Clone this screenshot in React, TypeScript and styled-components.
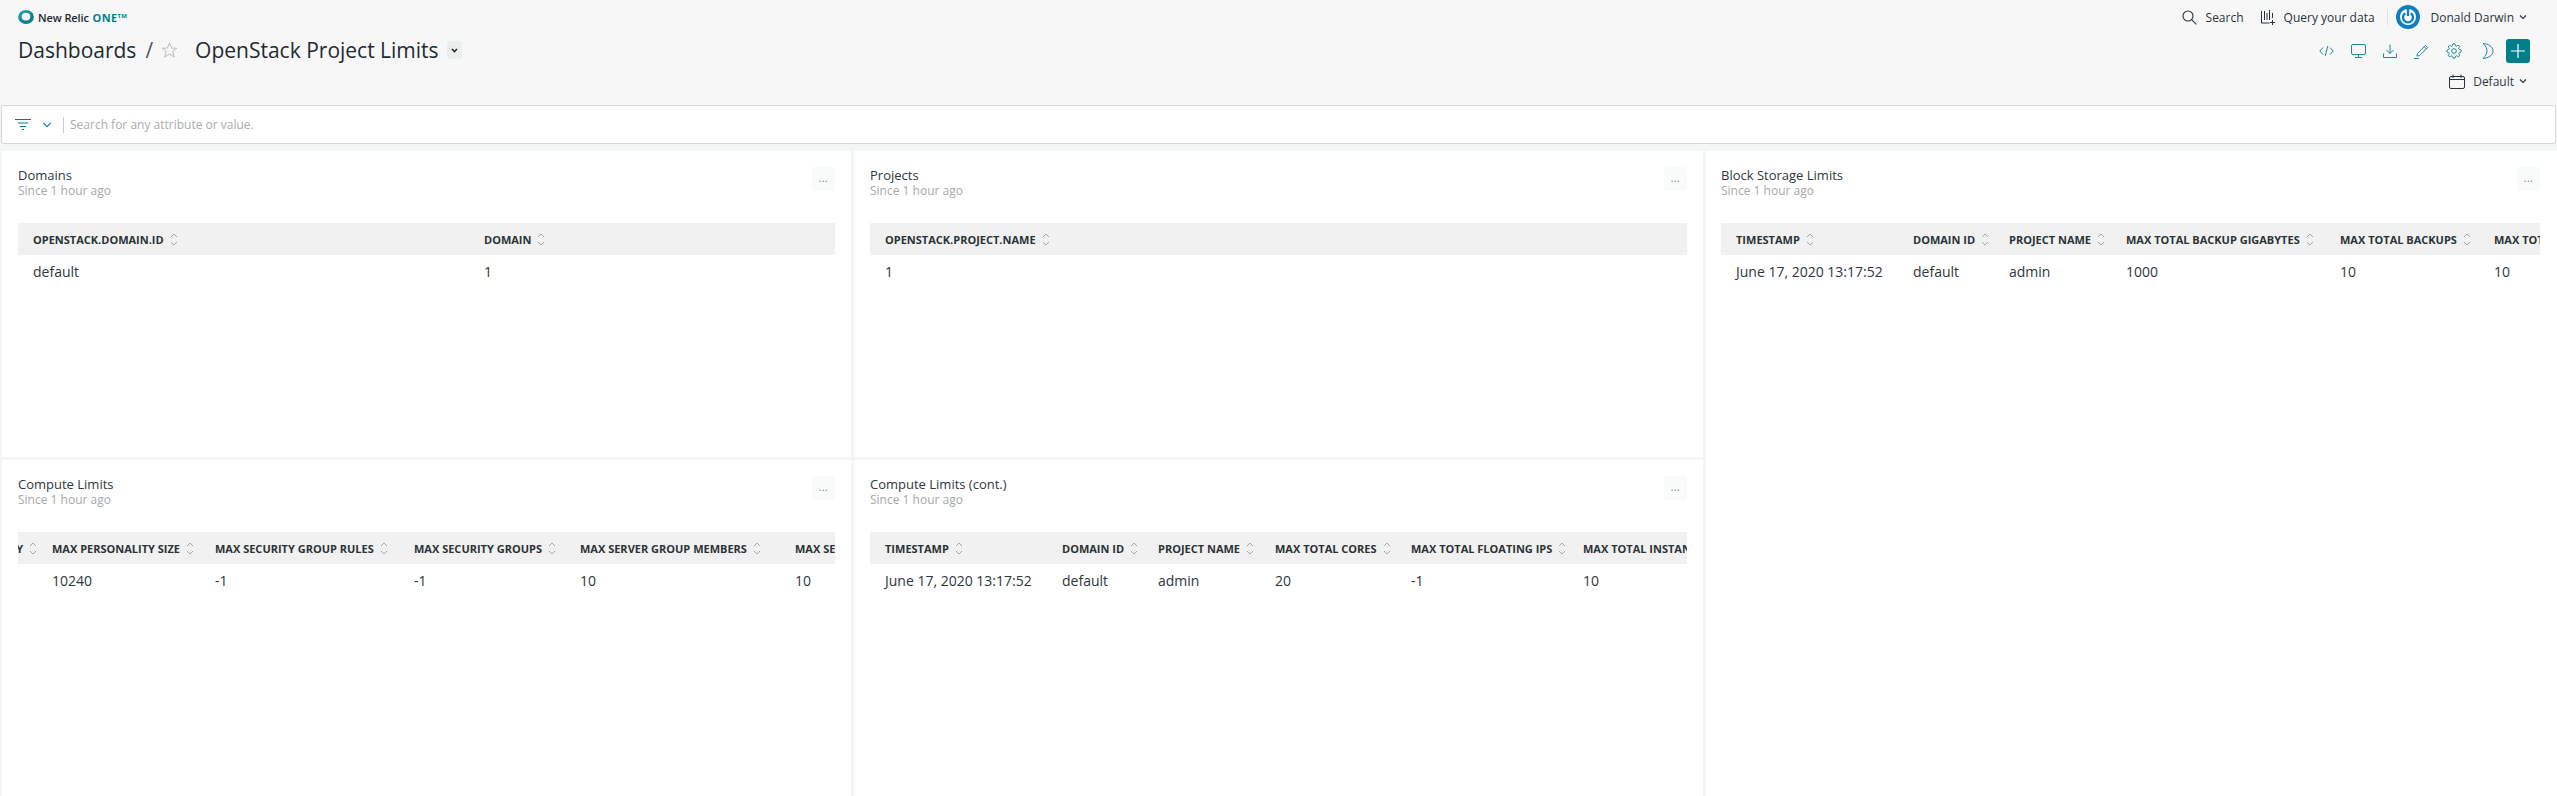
import React from "react";
import styled, { createGlobalStyle } from "styled-components";

const Global = createGlobalStyle`
  html, body { margin: 0; padding: 0; height: 100%; overflow: hidden; background: #f4f5f5; }
  #root { height: 100%; }
  * { box-sizing: border-box; }
  body { font-family: "Open Sans", "Liberation Sans", sans-serif; color: #293338; }
`;

const Page = styled.div`
  width: 2557px;
  height: 796px;
  display: flex;
  flex-direction: column;
  overflow: hidden;
  background: #f4f5f5;
`;
const Header = styled.header`
  background: #f7f7f8;
  height: 105px;
  padding: 5px 27px 0 18px;
  display: flex;
  justify-content: space-between;
`;
const Left = styled.div`
  display: flex;
  flex-direction: column;
`;
const Brand = styled.div`
  display: flex;
  align-items: center;
  height: 24px;
  font-size: 11px;
  font-weight: 600;
  color: #1d2a2f;
  gap: 4px;
  letter-spacing: -0.1px;
`;
const One = styled.span`
  color: #00838f;
  font-weight: 700;
  margin-left: 1px;
  letter-spacing: 0.3px;
  sup { font-size: 6px; vertical-align: 4px; line-height: 0; }
`;
const TitleRow = styled.div`
  display: flex;
  align-items: center;
  margin-top: 4px;
  height: 34px;
  font-size: 21px;
  color: #1f2b30;
`;
const Slash = styled.span`
  margin-left: 9px;
  color: #4c5559;
`;
const Star = styled.span`
  display: flex;
  margin: 0 17px 0 8px;
`;
const Caret = styled.span`
  width: 15px;
  height: 18px;
  margin-left: 8px;
  background: #eceeee;
  border-radius: 3px;
  display: flex;
  align-items: center;
  justify-content: center;
`;
const Right = styled.div`
  display: flex;
  flex-direction: column;
  align-items: flex-end;
`;
const TopNav = styled.div`
  display: flex;
  align-items: center;
  height: 24px;
  font-size: 12px;
  padding-right: 3px;
  color: #2a3338;
`;
const NavItem = styled.span<{ $gap?: number }>`
  display: flex;
  align-items: center;
  gap: ${(p) => p.$gap ?? 9}px;
  margin-right: 17px;
`;
const Divider = styled.span`
  width: 1px;
  height: 16px;
  background: #e0e2e2;
  margin: 0 8px 0 -5px;
`;
const UserName = styled.span`
  display: flex;
  align-items: center;
  gap: 5px;
  margin-left: 11px;
`;
const ActionRow = styled.div`
  display: flex;
  align-items: center;
  margin-top: 10px;
  height: 24px;
`;
const ActionIcon = styled.span<{ $w?: number }>`
  display: flex;
  width: ${(p) => p.$w ?? 32}px;
  justify-content: center;
`;
const PlusButton = styled.span`
  width: 24px;
  height: 24px;
  border-radius: 3px;
  background: #007e8a;
  display: flex;
  align-items: center;
  justify-content: center;
`;
const DefaultRow = styled.div`
  display: flex;
  align-items: center;
  margin-top: 9px;
  height: 18px;
  font-size: 12px;
  color: #2f393e;
  gap: 8px;
  padding-right: 3px;
`;
const ChevronWrap = styled.span`
  display: flex;
  margin-left: -3px;
`;
const FilterBar = styled.div`
  height: 39px;
  margin: 0 1px 0 1px;
  width: 2555px;
  background: #fff;
  border: 1px solid #d6d8d8;
  border-radius: 2px;
  display: flex;
  align-items: center;
  padding-left: 13px;
  flex: none;
`;
const FilterChevron = styled.span`
  display: flex;
  margin-left: 11px;
`;
const FilterDivider = styled.span`
  width: 1px;
  height: 16px;
  background: #c9cccc;
  margin: 0 6px 0 11px;
`;
const Placeholder = styled.span`
  font-size: 12px;
  color: #a9adae;
`;
const Grid = styled.div`
  margin-top: 7px;
  flex: 1;
  min-height: 0;
  display: grid;
  grid-template-columns: 849px 849px 853px;
  grid-template-rows: 306px 1fr;
  column-gap: 3px;
  row-gap: 3px;
  margin-left: 2px;
`;
const Panel = styled.section<{ $tall?: boolean }>`
  background: #fff;
  padding: 16px ${(p) => (p.$tall ? 19 : 16)}px 0 ${(p) => (p.$tall ? 15 : 16)}px;
  overflow: hidden;
  min-width: 0;
  grid-row: ${(p) => (p.$tall ? "1 / span 2" : "auto")};
  grid-column: ${(p) => (p.$tall ? "3" : "auto")};
`;
const PanelTop = styled.div`
  display: flex;
  justify-content: space-between;
  align-items: flex-start;
  height: 56px;
`;
const PanelTitle = styled.div`
  font-size: 13px;
  line-height: 16px;
  color: #2f383c;
`;
const PanelSub = styled.div`
  font-size: 12px;
  line-height: 16px;
  color: #a6a9aa;
`;
const Dots = styled.span`
  width: 23px;
  height: 24px;
  background: #f9fafa;
  border-radius: 3px;
  font-size: 10px;
  letter-spacing: 0.6px;
  color: #747a7c;
  display: flex;
  align-items: center;
  justify-content: center;
  padding-bottom: 3px;
`;
const Table = styled.div`
  overflow: hidden;
`;
const HeadRow = styled.div`
  display: flex;
  height: 32px;
  align-items: center;
  background: #f1f1f1;
`;
const BodyRow = styled.div`
  display: flex;
  height: 33px;
  align-items: center;
`;
const HeadCell = styled.div<{ $w: number; $clip?: boolean }>`
  flex: 0 0 ${(p) => p.$w}px;
  width: ${(p) => p.$w}px;
  padding-left: ${(p) => (p.$clip ? 0 : 15)}px;
  display: flex;
  align-items: center;
  justify-content: ${(p) => (p.$clip ? "flex-end" : "flex-start")};
  gap: 6px;
  font-size: 11px;
  font-weight: 700;
  color: #2a3337;
  white-space: nowrap;
  overflow: hidden;
`;
const Cell = styled.div<{ $w: number }>`
  flex: 0 0 ${(p) => p.$w}px;
  padding-left: 15px;
  font-size: 14px;
  color: #2e373b;
  white-space: nowrap;
`;
const SortWrap = styled.span`
  display: flex;
  flex: none;
`;

const Sort = () => (
  <SortWrap>
    <svg width="8" height="15" viewBox="0 0 8 15" fill="none" stroke="#a6aaab" strokeWidth="1">
      <path d="M1 5l3-3 3 3M1 10l3 3 3-3" />
    </svg>
  </SortWrap>
);
const Chevron = ({ color = "#2a3338", w = 8 }: { color?: string; w?: number }) => (
  <svg width={w} height={w * 0.75} viewBox="0 0 8 6" fill="none" stroke={color} strokeWidth="1.1">
    <path d="M1 1.500l3 3 3-3" />
  </svg>
);
const teal = "#1e8a96";

interface Col { label: string; value: string; w: number; clip?: boolean }
const Data = ({ cols }: { cols: Col[] }) => (
  <Table>
    <HeadRow>
      {cols.map((c) => (
        <HeadCell key={c.label} $w={c.w} $clip={c.clip}>
          {c.label}
          <Sort />
        </HeadCell>
      ))}
    </HeadRow>
    <BodyRow>
      {cols.map((c) => (
        <Cell key={c.label} $w={c.w}>{c.value}</Cell>
      ))}
    </BodyRow>
  </Table>
);
const Widget = ({ title, cols, tall }: { title: string; cols: Col[]; tall?: boolean }) => (
  <Panel $tall={tall}>
    <PanelTop>
      <div>
        <PanelTitle>{title}</PanelTitle>
        <PanelSub>Since 1 hour ago</PanelSub>
      </div>
      <Dots>...</Dots>
    </PanelTop>
    <Data cols={cols} />
  </Panel>
);

const ts = "June 17, 2020 13:17:52";

export default function App() {
  return (
    <Page>
      <Global />
      <Header>
        <Left>
          <Brand>
            <svg width="16" height="14" viewBox="0 0 16 14">
              <defs>
                <linearGradient id="nrRing" x1="0" y1="0" x2="1" y2="1">
                  <stop offset="0" stopColor="#2aa6b0" />
                  <stop offset="1" stopColor="#06717c" />
                </linearGradient>
              </defs>
              <ellipse cx="8" cy="7" rx="7.900" ry="6.900" fill="url(#nrRing)" />
              <ellipse cx="8" cy="6.600" rx="4.300" ry="3.900" fill="#f7f7f8" />
            </svg>
            <span>New Relic <One>ONE<sup>TM</sup></One></span>
          </Brand>
          <TitleRow>
            Dashboards
            <Slash>/</Slash>
            <Star>
              <svg width="17" height="17" viewBox="0 0 17 17" fill="none" stroke="#b9bdbe" strokeWidth="1">
                <path d="M8.500 1.200l2.200 5h5.200l-4.200 3.300 1.600 5.600-4.800-3.200-4.800 3.200 1.600-5.600L1.100 6.200h5.200z" />
              </svg>
            </Star>
            OpenStack Project Limits
            <Caret>
              <svg width="7" height="5" viewBox="0 0 7 5" fill="none" stroke="#1f2b30" strokeWidth="1.600">
                <path d="M1 1l2.500 2.500L6 1" />
              </svg>
            </Caret>
          </TitleRow>
        </Left>
        <Right>
          <TopNav>
            <NavItem>
              <svg width="15" height="15" viewBox="0 0 15 15" fill="none" stroke="#2a3338" strokeWidth="1.100">
                <circle cx="6" cy="6" r="5" />
                <path d="M9.700 9.700l4.600 4.600" />
              </svg>
              Search
            </NavItem>
            <NavItem $gap={8}>
              <svg width="15" height="15" viewBox="0 0 15 15" fill="none" stroke="#2a3338" strokeWidth="1">
                <path d="M.5 1v12h8M3.500 1v9M6 3v7M8.500 0v10M11.500 3v5M11.500 10v5M9 12.500h5" />
              </svg>
              Query your data
            </NavItem>
            <Divider />
            <svg width="24" height="24" viewBox="0 0 24 24" fill="none">
              <circle cx="12" cy="12" r="12" fill="#0f7fbd" />
              <circle cx="12" cy="12" r="8" fill="#fff" />
              <path d="M9.300 8.200a5 5 0 1 0 5.400 0" stroke="#0f7fbd" strokeWidth="2.400" />
              <path d="M12 4v7" stroke="#0f7fbd" strokeWidth="2.400" />
            </svg>
            <UserName>Donald Darwin <Chevron /></UserName>
          </TopNav>
          <ActionRow>
            <ActionIcon>
              <svg width="15" height="12" viewBox="0 0 15 12" fill="none" stroke={teal} strokeWidth="1">
                <path d="M4 2.500L.8 6 4 9.500M11 2.500L14.200 6 11 9.500M8.800 1L6.200 11" />
              </svg>
            </ActionIcon>
            <ActionIcon>
              <svg width="15" height="14" viewBox="0 0 15 14" fill="none" stroke={teal} strokeWidth="1">
                <rect x=".5" y=".5" width="14" height="10" rx="1.500" />
                <path d="M7.500 10.500v3M4 13.500h7" />
              </svg>
            </ActionIcon>
            <ActionIcon>
              <svg width="14" height="14" viewBox="0 0 14 14" fill="none" stroke={teal} strokeWidth="1">
                <path d="M7 .5v9M3.500 6L7 9.500 10.500 6M.5 9.500v4h13v-4" />
              </svg>
            </ActionIcon>
            <ActionIcon>
              <svg width="16" height="15" viewBox="0 0 16 15" fill="none" stroke={teal} strokeWidth="1">
                <path d="M3.500 9.500L11.500 1.300l2.200 2.200-8 8-2.800.6zM10.200 2.700l2.200 2.200M0 14.500h5" />
              </svg>
            </ActionIcon>
            <ActionIcon>
              <svg width="16" height="16" viewBox="0 0 24 24" fill="none" stroke={teal} strokeWidth="1.500">
                <circle cx="12" cy="12" r="3.500" />
                <path d="M19.400 15a1.650 1.650 0 0 0 .33 1.820l.06.06a2 2 0 1 1-2.830 2.830l-.06-.06a1.650 1.650 0 0 0-2.820 1.170V21a2 2 0 0 1-4 0v-.09a1.650 1.650 0 0 0-2.820-1.120l-.06.06a2 2 0 1 1-2.830-2.830l.06-.06a1.650 1.650 0 0 0-1.170-2.820H3a2 2 0 0 1 0-4h.09a1.650 1.650 0 0 0 1.120-2.820l-.06-.06a2 2 0 1 1 2.830-2.830l.06.06a1.650 1.650 0 0 0 2.820-1.170V3a2 2 0 0 1 4 0v.09a1.650 1.650 0 0 0 2.820 1.120l.06-.06a2 2 0 1 1 2.830 2.830l-.06.06a1.650 1.650 0 0 0 1.170 2.820H21a2 2 0 0 1 0 4h-.09a1.650 1.650 0 0 0-1.510 1z" />
              </svg>
            </ActionIcon>
            <ActionIcon $w={36}>
              <svg width="12" height="16" viewBox="0 0 12 16" fill="none" stroke={teal} strokeWidth="1">
                <path d="M1 .5c5 .3 10 3 10 7.500s-5 7.200-10 7.500C4 12.500 5 10.500 5 8S4 3 1 .5z" />
              </svg>
            </ActionIcon>
            <PlusButton>
              <svg width="14" height="14" viewBox="0 0 14 14" stroke="#fff" strokeWidth="1.200">
                <path d="M7 0v14M0 7h14" />
              </svg>
            </PlusButton>
          </ActionRow>
          <DefaultRow>
            <svg width="16" height="15" viewBox="0 0 16 15" fill="none" stroke="#2a3338" strokeWidth="1">
              <rect x=".5" y="2.500" width="15" height="12" rx="1.500" />
              <path d="M.5 5.500h15M4 .5v3.500M12 .5v3.500M7 2.500h2" />
            </svg>
            Default
            <ChevronWrap><Chevron /></ChevronWrap>
          </DefaultRow>
        </Right>
      </Header>
      <FilterBar>
        <svg width="16" height="11" viewBox="0 0 16 11" stroke="#007e8a" strokeWidth="1">
          <path d="M0 .5h16M3 4h10M5 7.500h6M7 10.500h2" />
        </svg>
        <FilterChevron><Chevron color="#1e8a96" w={10} /></FilterChevron>
        <FilterDivider />
        <Placeholder>Search for any attribute or value.</Placeholder>
      </FilterBar>
      <Grid>
        <Widget title="Domains" cols={[
          { label: "OPENSTACK.DOMAIN.ID", value: "default", w: 451 },
          { label: "DOMAIN", value: "1", w: 300 },
        ]} />
        <Widget title="Projects" cols={[{ label: "OPENSTACK.PROJECT.NAME", value: "1", w: 600 }]} />
        <Widget tall title="Block Storage Limits" cols={[
          { label: "TIMESTAMP", value: ts, w: 177 },
          { label: "DOMAIN ID", value: "default", w: 96 },
          { label: "PROJECT NAME", value: "admin", w: 117 },
          { label: "MAX TOTAL BACKUP GIGABYTES", value: "1000", w: 214 },
          { label: "MAX TOTAL BACKUPS", value: "10", w: 154 },
          { label: "MAX TOTAL VOLUME GIGABYTES", value: "10", w: 240 },
        ]} />
        <Widget title="Compute Limits" cols={[
          { label: "Y", value: "", w: 19, clip: true },
          { label: "MAX PERSONALITY SIZE", value: "10240", w: 163 },
          { label: "MAX SECURITY GROUP RULES", value: "-1", w: 199 },
          { label: "MAX SECURITY GROUPS", value: "-1", w: 166 },
          { label: "MAX SERVER GROUP MEMBERS", value: "10", w: 215 },
          { label: "MAX SERVER GROUPS", value: "10", w: 180 },
        ]} />
        <Widget title="Compute Limits (cont.)" cols={[
          { label: "TIMESTAMP", value: ts, w: 177 },
          { label: "DOMAIN ID", value: "default", w: 96 },
          { label: "PROJECT NAME", value: "admin", w: 117 },
          { label: "MAX TOTAL CORES", value: "20", w: 136 },
          { label: "MAX TOTAL FLOATING IPS", value: "-1", w: 172 },
          { label: "MAX TOTAL INSTANCES", value: "10", w: 180 },
        ]} />
      </Grid>
    </Page>
  );
}
